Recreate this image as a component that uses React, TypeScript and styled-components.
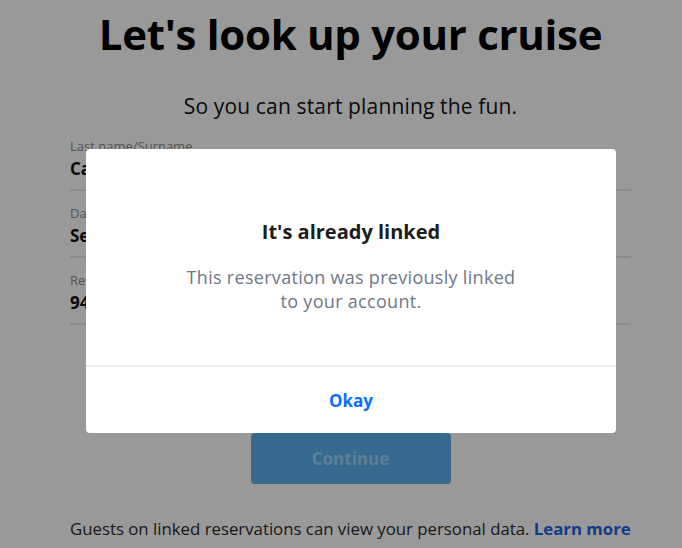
import styled, { createGlobalStyle } from "styled-components";

const GlobalStyle = createGlobalStyle`
  html, body {
    margin: 0;
    padding: 0;
    background: #ffffff;
  }
  body {
    font-family: "Open Sans", "Lato", sans-serif;
    color: #000;
    overflow: hidden;
  }
`;

const Page = styled.div`
  width: 682px;
  min-height: 548px;
  box-sizing: border-box;
  padding-left: 19px;
  display: flex;
  flex-direction: column;
  align-items: center;

  & > * {
    flex-shrink: 0;
  }
`;

const Title = styled.h1`
  margin: 6px 0 0;
  font-size: 42px;
  line-height: 56px;
  font-weight: 700;
  letter-spacing: -0.3px;
  color: #000;
`;

const Subtitle = styled.p`
  margin: 31px 0 0;
  font-size: 21px;
  line-height: 26px;
  letter-spacing: 0.15px;
  color: #111;
`;

const Form = styled.div`
  width: 561px;
  margin-top: 5px;
  display: flex;
  flex-direction: column;
`;

const Field = styled.div`
  height: 67px;
  border-bottom: 2px solid #e6e6e6;
  box-sizing: border-box;
  padding-top: 14px;
  display: flex;
  flex-direction: column;
`;

const Label = styled.span`
  font-size: 13px;
  line-height: 16px;
  color: #8a8a8a;
`;

const Value = styled.span`
  margin-top: 4px;
  font-size: 17px;
  line-height: 22px;
  font-weight: 700;
  color: #111;
`;

const ContinueButton = styled.button`
  margin-top: 108px;
  width: 200px;
  height: 51px;
  border: none;
  border-radius: 4px;
  background: #5db1ed;
  color: #9ad4ff;
  font-family: inherit;
  font-size: 17px;
  font-weight: 700;
`;

const Note = styled.p`
  margin: 34px 0 0;
  width: 561px;
  font-size: 16.8px;
  line-height: 22px;
  white-space: nowrap;
  color: #2b2b2b;
`;

const NoteLink = styled.a`
  color: #1f62e0;
  font-weight: 700;
  text-decoration: none;
`;

const Overlay = styled.div`
  position: fixed;
  inset: 0;
  background: rgba(0, 0, 0, 0.4);
  display: flex;
  align-items: flex-start;
  justify-content: center;
  padding: 149px 0 0 20px;
  box-sizing: border-box;
`;

const Dialog = styled.div`
  width: 530px;
  background: #fff;
  border-radius: 4px;
  display: flex;
  flex-direction: column;
  text-align: center;
`;

const DialogBody = styled.div`
  padding: 71px 40px 52px;
  display: flex;
  flex-direction: column;
  align-items: center;
`;

const DialogTitle = styled.h2`
  margin: 0;
  font-size: 20px;
  line-height: 24px;
  font-weight: 700;
  color: #1c1c1c;
`;

const DialogText = styled.p`
  margin: 21px 0 0;
  max-width: 345px;
  font-size: 18px;
  line-height: 24px;
  letter-spacing: 0.3px;
  color: #6e7886;
`;

const DialogFooter = styled.div`
  border-top: 2px solid #ebebeb;
  height: 66px;
  display: flex;
  align-items: center;
  justify-content: center;
`;

const OkayButton = styled.button`
  border: none;
  background: none;
  font-family: inherit;
  font-size: 17px;
  font-weight: 700;
  color: #0a6ff5;
  padding: 0;
`;

const fields = [
  { label: "Last name/Surname", value: "Carter" },
  { label: "Date of birth", value: "September 14, 1986" },
  { label: "Reservation number", value: "9438271" },
];

export default function App() {
  return (
    <>
      <GlobalStyle />
      <Page>
        <Title>Let's look up your cruise</Title>
        <Subtitle>So you can start planning the fun.</Subtitle>
        <Form>
          {fields.map((f) => (
            <Field key={f.label}>
              <Label>{f.label}</Label>
              <Value>{f.value}</Value>
            </Field>
          ))}
        </Form>
        <ContinueButton disabled>Continue</ContinueButton>
        <Note>
          Guests on linked reservations can view your personal data.{" "}
          <NoteLink href="#">Learn more</NoteLink>
        </Note>
      </Page>
      <Overlay>
        <Dialog>
          <DialogBody>
            <DialogTitle>It's already linked</DialogTitle>
            <DialogText>
              This reservation was previously linked to your account.
            </DialogText>
          </DialogBody>
          <DialogFooter>
            <OkayButton>Okay</OkayButton>
          </DialogFooter>
        </Dialog>
      </Overlay>
    </>
  );
}
